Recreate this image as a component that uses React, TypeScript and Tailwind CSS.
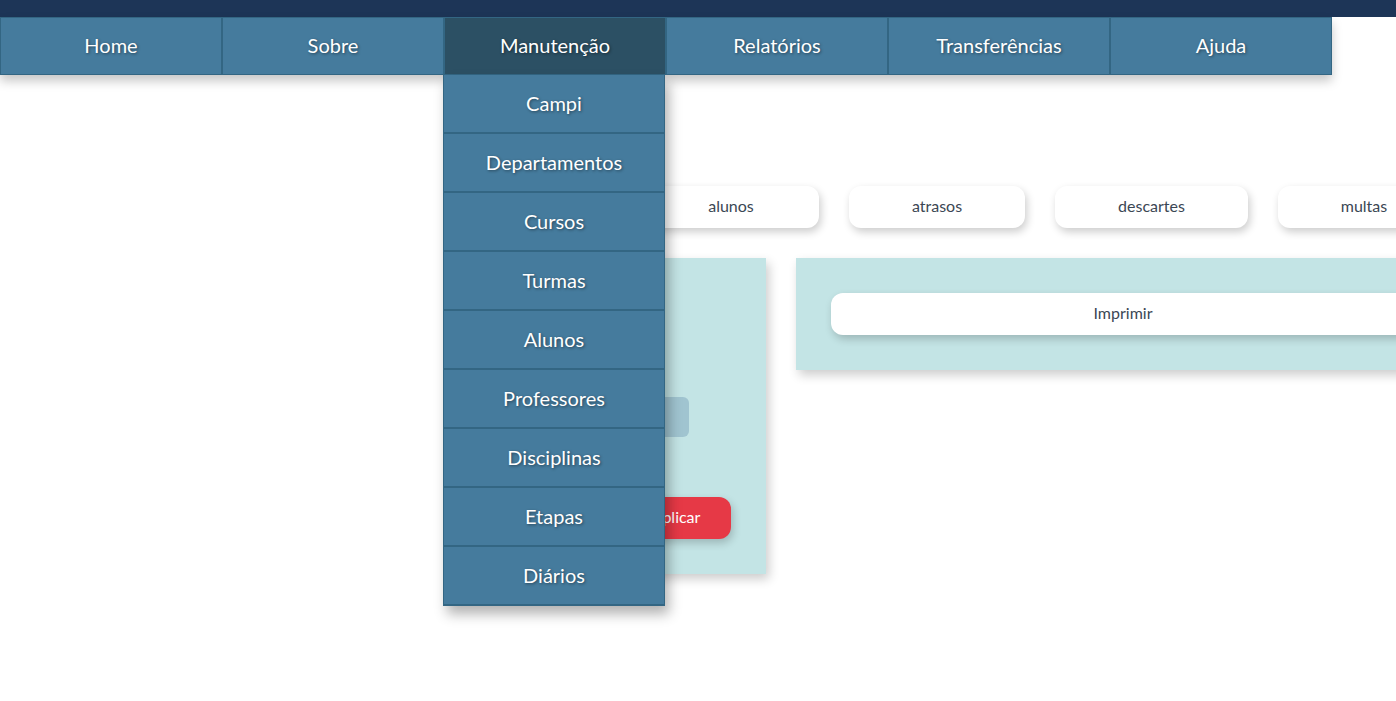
import React from "react";

const navItems = ["Home", "Sobre", "Manutenção", "Relatórios", "Transferências", "Ajuda"];
const subItems = ["Campi", "Departamentos", "Cursos", "Turmas", "Alunos", "Professores", "Disciplinas", "Etapas", "Diários"];
const reportButtons = [
  { label: "alunos", w: "w-[176px]" },
  { label: "atrasos", w: "w-[176px]" },
  { label: "descartes", w: "w-[193px]" },
  { label: "multas", w: "w-[172px]" },
];

const shadowText = "[text-shadow:1px_1px_3px_rgba(0,0,0,0.45)]";

export default function App() {
  return (
    <div className="w-[1396px] h-[701px] overflow-hidden bg-white font-['Lato','Open_Sans',sans-serif]">
      <div className="h-[17px] bg-[#1d3557]" />

      <nav className="relative z-10 flex w-[1332px] shadow-[0_6px_10px_rgba(0,0,0,0.22)]">
        {navItems.map((item) => {
          const active = item === "Manutenção";
          return (
            <div key={item} className="relative">
              <div
                className={
                  "w-[222px] h-[58px] pb-[2px] flex items-center justify-center border border-[#336683] text-white text-[20px] " +
                  shadowText +
                  (active ? " bg-[#2c5064]" : " bg-[#457b9d]")
                }
              >
                {item}
              </div>
              {active && (
                <ul className="absolute left-[-1px] top-[58px] w-[222px] bg-[#457b9d] shadow-[4px_8px_12px_rgba(0,0,0,0.3)]">
                  {subItems.map((sub) => (
                    <li
                      key={sub}
                      className={
                        "h-[59px] pb-[2px] flex items-center justify-center border-x border-b-2 border-[#336683] text-white text-[20px] " +
                        shadowText
                      }
                    >
                      {sub}
                    </li>
                  ))}
                </ul>
              )}
            </div>
          );
        })}
      </nav>

      <main className="pt-[111px]">
        <div className="flex gap-[30px] pl-[643px]">
          {reportButtons.map((b) => (
            <button
              key={b.label}
              className={
                b.w +
                " shrink-0 h-[42px] pb-[2px] rounded-xl bg-white text-[16px] text-[#3b4754] shadow-[2px_4px_8px_rgba(0,0,0,0.2)]"
              }
            >
              {b.label}
            </button>
          ))}
        </div>

        <div className="flex gap-[30px] pl-[466px] pt-[30px] items-start">
          <section className="shrink-0 w-[300px] h-[316px] bg-[#c3e4e5] p-[35px] flex flex-col items-end shadow-[3px_5px_10px_rgba(0,0,0,0.2)]">
            <div className="mt-[104px] w-[220px] h-[40px] mr-[42px] rounded-md bg-[#a0c4d0]" />
            <button className="mt-[60px] w-[110px] h-[42px] pb-[2px] rounded-xl bg-[#e63946] text-white text-[16px] shadow-[2px_4px_8px_rgba(0,0,0,0.2)]">
              Aplicar
            </button>
          </section>

          <section className="shrink-0 w-[700px] h-[112px] bg-[#c3e4e5] p-[35px] shadow-[3px_5px_10px_rgba(0,0,0,0.2)]">
            <button className="w-[584px] h-[42px] pb-[2px] rounded-xl bg-white text-[16px] text-[#3b4754] shadow-[2px_4px_8px_rgba(0,0,0,0.2)]">
              Imprimir
            </button>
          </section>
        </div>
      </main>
    </div>
  );
}
